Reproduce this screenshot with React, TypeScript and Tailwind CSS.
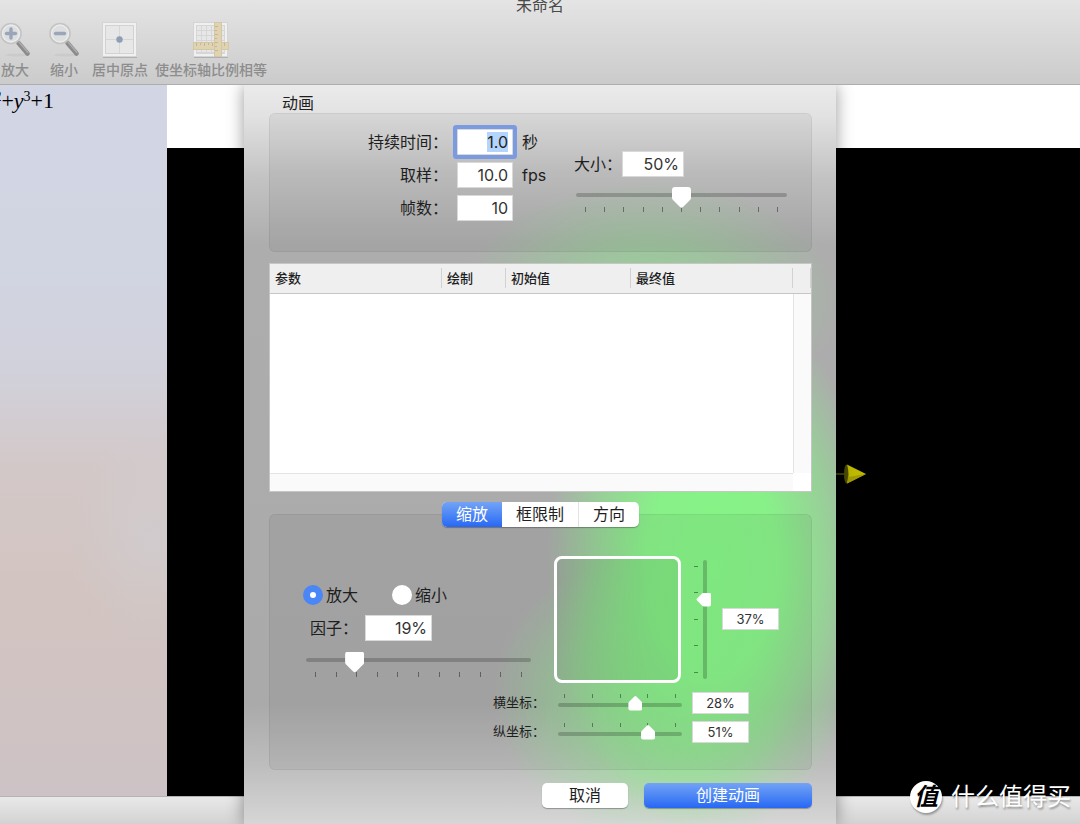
import { useEffect, useRef, useState } from "react";
import type { ReactNode } from "react";
import clsx from "clsx";

/* ---------- Toolbar icons ---------- */
function MagnifierIcon({ plus }: { plus?: boolean }) {
  return (
    <svg width="36" height="36" viewBox="0 0 36 36" fill="none">
      <ellipse cx="20" cy="33" rx="12" ry="1.5" fill="#c4c4c4" opacity="0.6" />
      <path d="M21.500 21l9 10.500" stroke="#8b8b8b" strokeWidth="4.6" strokeLinecap="round" />
      <path d="M22 20l9 10.500" stroke="#adadad" strokeWidth="1.4" strokeLinecap="round" />
      <circle cx="14" cy="11.500" r="10" fill="#dcdee0" stroke="#c4c4c4" strokeWidth="1.600" />
      <circle cx="14" cy="11.500" r="8.400" stroke="#ececec" strokeWidth="1.200" />
      <path d="M9.500 11.500h9" stroke="#9aa6b8" strokeWidth="3.400" strokeLinecap="round" />
      {plus && <path d="M14 7v9" stroke="#9aa6b8" strokeWidth="3.400" strokeLinecap="round" />}
    </svg>
  );
}

function CenterIcon() {
  return (
    <svg width="36" height="36" viewBox="0 0 36 36" fill="none">
      <path d="M1 35.500h34" stroke="#b0b0b0" />
      <rect x="0.500" y="0.500" width="34" height="34" fill="#f0f0f0" stroke="#d4d4d4" />
      <rect x="3.500" y="3.500" width="28" height="28" fill="#e7e7e7" stroke="#d2d2d2" />
      <path d="M17.500 4v27M4 17.500h27" stroke="#d6d6d6" />
      <circle cx="17.500" cy="17.500" r="3.200" fill="#8f9fb3" />
    </svg>
  );
}

function RulerIcon() {
  return (
    <svg width="36" height="36" viewBox="0 0 36 36" fill="none">
      <path d="M1 35.500h34" stroke="#b0b0b0" />
      <rect x="0.500" y="0.500" width="34" height="34" fill="#f0f0f0" stroke="#d4d4d4" />
      <rect x="3.500" y="3.500" width="28" height="28" fill="#e7e7e7" stroke="#d6d6d6" />
      <path
        d="M8.500 4v27M13.500 4v27M18.500 4v27M28.500 4v27M4 8.500h27M4 13.500h27M4 18.500h27M4 30.500h27"
        stroke="#d6d6d6"
      />
      <rect x="0.500" y="20.500" width="35" height="7" fill="#dfd3b1" stroke="#d3c7a6" />
      <path d="M3.500 21v3M7.500 21v2M11.500 21v3M15.500 21v2M19.500 21v3M31.500 21v3" stroke="#c3b692" />
      <rect x="21.500" y="0.500" width="7" height="34" fill="#dfd3b1" stroke="#d3c7a6" />
      <path d="M22 4.500h3M22 8.500h2M22 12.500h3M22 16.500h2M22 20.500h3M22 24.500h2M22 28.500h3" stroke="#c3b692" />
    </svg>
  );
}

function ToolbarItem({ label, children }: { label: string; children: ReactNode }) {
  return (
    <button className="flex min-w-[42px] shrink-0 flex-col items-center gap-1 text-sm leading-4 font-medium text-[#8d8d8d]">
      {children}
      {label}
    </button>
  );
}

/* ---------- Form pieces ---------- */
function Ticks({ count, className }: { count: number; className: string }) {
  return (
    <div aria-hidden className={clsx("flex justify-between", className)}>
      {Array.from({ length: count }, (_, i) => (
        <span key={i} className="h-full w-px bg-black/40" />
      ))}
    </div>
  );
}

function Slider({ label, initial, className }: { label: string; initial: number; className: string }) {
  const [value, setValue] = useState(initial);
  return (
    <div className={className}>
      <input
        type="range"
        aria-label={label}
        value={value}
        onChange={(e) => setValue(Number(e.target.value))}
        className="block h-[22px] w-full appearance-none bg-transparent [&::-webkit-slider-runnable-track]:h-1 [&::-webkit-slider-runnable-track]:rounded-full [&::-webkit-slider-runnable-track]:bg-[linear-gradient(#0003,#0003)] [&::-webkit-slider-thumb]:mt-[-6px] [&::-webkit-slider-thumb]:h-[21px] [&::-webkit-slider-thumb]:w-[19px] [&::-webkit-slider-thumb]:appearance-none [&::-webkit-slider-thumb]:bg-white [&::-webkit-slider-thumb]:[clip-path:path('M3_0H16Q19_0_19_3V11Q19_12_18_13L11_20Q9.500_21.500_8_20L1_13Q0_12_0_11V3Q0_0_3_0Z')]"
      />
      <Ticks count={11} className="mt-px h-[5px] px-[9px]" />
    </div>
  );
}

function SmallSlider({ id, initial }: { id: string; initial: number }) {
  const [value, setValue] = useState(initial);
  return (
    <div className="w-[124px]">
      <Ticks count={5} className="h-1 px-1.5" />
      <input
        id={id}
        type="range"
        min={-100}
        max={100}
        value={value}
        onChange={(e) => setValue(Number(e.target.value))}
        className="block h-[14px] w-full appearance-none bg-transparent [&::-webkit-slider-runnable-track]:h-1 [&::-webkit-slider-runnable-track]:rounded-full [&::-webkit-slider-runnable-track]:bg-[linear-gradient(#0003,#0003)] [&::-webkit-slider-thumb]:mt-[-7px] [&::-webkit-slider-thumb]:h-[15px] [&::-webkit-slider-thumb]:w-[14px] [&::-webkit-slider-thumb]:appearance-none [&::-webkit-slider-thumb]:bg-white [&::-webkit-slider-thumb]:[clip-path:path('M2_15H12Q14_15_14_13V8Q14_7_13_6L8_1Q7_0_6_1L1_6Q0_7_0_8V13Q0_15_2_15Z')]"
      />
    </div>
  );
}

function VerticalSlider({ label, initial }: { label: string; initial: number }) {
  const [value, setValue] = useState(initial);
  return (
    <div className="flex h-[119px]">
      <div aria-hidden className="flex w-1 flex-col justify-between py-1.5">
        {[0, 1, 2, 3, 4].map((i) => (
          <span key={i} className="h-px w-full bg-black/40" />
        ))}
      </div>
      <input
        type="range"
        aria-label={label}
        min={-100}
        max={100}
        value={value}
        onChange={(e) => setValue(Number(e.target.value))}
        className="block h-full w-[14px] appearance-none bg-transparent [direction:rtl] [writing-mode:vertical-lr] [&::-webkit-slider-runnable-track]:w-1 [&::-webkit-slider-runnable-track]:rounded-full [&::-webkit-slider-runnable-track]:bg-[linear-gradient(#0003,#0003)] [&::-webkit-slider-thumb]:ml-[-7px] [&::-webkit-slider-thumb]:h-[14px] [&::-webkit-slider-thumb]:w-[15px] [&::-webkit-slider-thumb]:appearance-none [&::-webkit-slider-thumb]:bg-white [&::-webkit-slider-thumb]:[clip-path:path('M15_2V12Q15_14_13_14H8Q7_14_6_13L1_8Q0_7_1_6L6_1Q7_0_8_0H13Q15_0_15_2Z')]"
      />
    </div>
  );
}

const fieldClass =
  "h-[26px] border border-black/15 bg-white px-1 text-right text-base text-[#333] outline-none";
const smallFieldClass =
  "h-[22px] w-[57px] border border-black/15 bg-white text-center text-[13px] text-[#333] outline-none";

const columns = ["参数", "绘制", "初始值", "最终值"];
const modes = ["缩放", "框限制", "方向"];

/* ---------- Sheet ---------- */
function AnimationSheet() {
  const durationRef = useRef<HTMLInputElement>(null);
  const [mode, setMode] = useState(modes[0]);

  useEffect(() => {
    durationRef.current?.focus();
    durationRef.current?.select();
  }, []);

  return (
    <section
      role="dialog"
      aria-labelledby="sheet-title"
      className="z-10 w-[592px] justify-self-center bg-[radial-gradient(ellipse_165px_270px_at_468px_480px,#86f586_0%,#86f586f0_40%,#88ee8890_70%,#90e09000_100%),radial-gradient(ellipse_150px_140px_at_400px_610px,#86ee86b0_0%,#88ee8870_50%,#90e09000_100%),radial-gradient(ellipse_190px_120px_at_406px_215px,#8ce88cb0_0%,#8ce08c60_50%,#90e09000_100%),linear-gradient(#ebebeb_0px,#e2e2e2_30px,#c4c4c4_90px,#adadad_160px,#aaaaaa_620px,#bdbdbd_680px,#d6d6d6_739px)] pt-[9px] pr-6 pb-4 pl-[25px] text-[#1e1e1e] shadow-[0_0_16px_rgba(0,0,0,0.4)]"
    >
      <h2 id="sheet-title" className="pl-[13px] text-base leading-[19px]">
        动画
      </h2>

      <div className="flex h-[139px] rounded-md border border-black/5 bg-black/5 pl-[97px]">
        <div className="grid grid-cols-[81px_56px_28px] content-start items-center gap-x-[9px] gap-y-[7px] pt-[15px] text-base leading-[26px]">
          <label htmlFor="duration" className="text-right whitespace-nowrap">持续时间：</label>
          <input
            ref={durationRef}
            id="duration"
            defaultValue="1.0"
            className={clsx(fieldClass, "rounded-[1px] ring-4 ring-[#7b9ae0] selection:bg-[#b3d4fc] selection:text-[#222]")}
          />
          <span>秒</span>
          <label htmlFor="sampling" className="text-right">取样：</label>
          <input id="sampling" defaultValue="10.0" className={fieldClass} />
          <span>fps</span>
          <label htmlFor="frames" className="text-right">帧数：</label>
          <input id="frames" defaultValue="10" className={fieldClass} />
        </div>
        <div className="ml-6 pt-[37px]">
          <div className="flex text-base leading-[26px]">
            <label htmlFor="size">大小：</label>
            <input id="size" defaultValue="50%" className={clsx(fieldClass, "w-[62px]")} />
          </div>
          <Slider label="大小" initial={50} className="mt-[7px] ml-0.5 w-[211px]" />
        </div>
      </div>

      <div className="mt-[11px] border border-[#c6c6c6] bg-white">
        <table className="w-full table-fixed border-collapse text-[13px]">
          <colgroup>
            <col className="w-[172px]" />
            <col className="w-16" />
            <col className="w-[125px]" />
            <col />
            <col className="w-[18px]" />
          </colgroup>
          <thead>
            <tr className="h-[29px] border-b border-[#c6c6c6] bg-[#efefef]">
              {columns.map((name) => (
                <th key={name} scope="col" className="p-0 text-left font-medium">
                  <div className="border-r border-[#d2d2d2] pl-[5px] leading-5">{name}</div>
                </th>
              ))}
              <td className="p-0">
                <div className="h-5 border-r border-[#d2d2d2]" />
              </td>
            </tr>
          </thead>
        </table>
        {/* empty rows with scrollbar gutters */}
        <div className="flex h-[179px]">
          <div className="flex-1" />
          <div className="w-[18px] border-l border-[#e4e4e4] bg-[#fafafa]" />
        </div>
        <div className="flex h-[18px]">
          <div className="flex-1 border-t border-[#e4e4e4] bg-[#fafafa]" />
          <div className="w-[18px]" />
        </div>
      </div>

      <div className="relative mt-2.5 -mb-[13px] flex justify-center">
        <div role="tablist" className="flex overflow-hidden rounded-[5px] bg-white shadow-[0_1px_1px_rgba(0,0,0,0.3)]">
          {modes.map((name) => (
            <button
              key={name}
              role="tab"
              aria-selected={mode === name}
              onClick={() => setMode(name)}
              className={clsx(
                "h-[25px] px-3.5 text-base leading-[25px]",
                mode === name
                  ? "bg-gradient-to-b from-[#73a3f5] to-[#2767f4] text-white"
                  : "border-r border-[#e2e2e2] last:border-r-0"
              )}
            >
              {name}
            </button>
          ))}
        </div>
      </div>

      <div className="rounded-md border border-black/5 bg-black/5 pt-[41px] pb-[26px]">
        <div className="flex pl-[33px]">
          <div className="w-[228px] pt-[29px]">
            <div className="flex gap-[34px] text-base leading-5">
              <label className="flex items-center gap-[3px]">
                <input
                  type="radio"
                  name="direction"
                  defaultChecked
                  className="size-5 appearance-none rounded-full border-[#4a86f5] bg-white checked:border-[7px]"
                />
                放大
              </label>
              <label className="flex items-center gap-[3px]">
                <input
                  type="radio"
                  name="direction"
                  className="size-5 appearance-none rounded-full border-[#4a86f5] bg-white checked:border-[7px]"
                />
                缩小
              </label>
            </div>
            <div className="mt-2.5 flex gap-[7px] pl-[7px] text-base leading-[26px]">
              <label htmlFor="factor">因子：</label>
              <input id="factor" defaultValue="19%" className={clsx(fieldClass, "w-[67px]")} />
            </div>
            <Slider label="因子" initial={19} className="mt-2 ml-[3px] w-[225px]" />
          </div>
          <div className="ml-[23px] size-[127px] rounded-lg border-[3px] border-white bg-black/5" />
          <div className="ml-[13px] flex items-center gap-2.5">
            <VerticalSlider label="竖坐标" initial={37} />
            <input aria-label="竖坐标" defaultValue="37%" className={smallFieldClass} />
          </div>
        </div>

        <div className="mt-[9px] grid grid-cols-[55px_124px_57px] items-center gap-x-[10px] gap-y-[7px] pl-[223px] text-[13px]">
          <label htmlFor="x-slider">横坐标：</label>
          <SmallSlider id="x-slider" initial={28} />
          <input aria-label="横坐标" defaultValue="28%" className={smallFieldClass} />
          <label htmlFor="y-slider">纵坐标：</label>
          <SmallSlider id="y-slider" initial={51} />
          <input aria-label="纵坐标" defaultValue="51%" className={smallFieldClass} />
        </div>
      </div>

      <div className="mt-[13px] flex justify-end gap-4 text-base">
        <button className="h-[25px] w-[86px] rounded-[5px] bg-white leading-[25px] shadow-[0_1px_1px_rgba(0,0,0,0.3)]">
          取消
        </button>
        <button className="h-[25px] w-[168px] rounded-[5px] bg-gradient-to-b from-[#73a3f5] to-[#2767f4] leading-[25px] text-white shadow-[0_1px_1px_rgba(0,0,0,0.3)]">
          创建动画
        </button>
      </div>
    </section>
  );
}

export default function App() {
  return (
    <div
      lang="zh-CN"
      className="relative flex min-h-screen flex-col overflow-hidden font-['Inter','Noto_Sans_CJK_SC',sans-serif]"
    >
      <header className="h-[85px] border-b border-[#adadad] bg-gradient-to-b from-[#e4e4e4] to-[#cbcbcb]">
        <h1 className="h-[22px] text-center text-base leading-[10px] text-[#4a4a4a]">未命名</h1>
        <nav className="-ml-1.5 flex gap-[7px]">
          <ToolbarItem label="放大"><MagnifierIcon plus /></ToolbarItem>
          <ToolbarItem label="缩小"><MagnifierIcon /></ToolbarItem>
          <ToolbarItem label="居中原点"><CenterIcon /></ToolbarItem>
          <ToolbarItem label="使坐标轴比例相等"><RulerIcon /></ToolbarItem>
        </nav>
      </header>

      <div className="grid flex-1 overflow-hidden *:[grid-area:1/1]">
        <div className="flex flex-col">
          <div className="flex flex-1">
            <aside className="w-[167px] bg-[radial-gradient(ellipse_80px_110px_at_150px_455px,#cfd0d680,#cfd0d600),linear-gradient(#d2d5e3_0%,#d1d5e2_25%,#d1d1db_40%,#d3c8c8_54%,#d2c4c0_72%,#cdc2c5_100%)]">
              <p className="flex w-[54px] justify-end overflow-hidden font-['Liberation_Serif',serif] text-[22px] leading-8 whitespace-nowrap text-black">
                <span>
                  <i>x</i>
                  <sup className="text-sm">2</sup>+<i>y</i>
                  <sup className="text-sm">3</sup>+1
                </span>
              </p>
            </aside>
            <main className="flex flex-1 flex-col">
              <div className="h-[63px] bg-white" />
              <div className="relative flex-1 bg-black">
                <svg className="absolute top-[315px] left-[669px]" width="31" height="22" viewBox="0 0 31 22">
                  <path d="M0 11h12" stroke="#77770a" />
                  <ellipse cx="10.500" cy="11" rx="2.500" ry="9.500" fill="#4b4a00" />
                  <path d="M11 1.500L30 11L11 20.500Q14 11 11 1.500Z" fill="#bdb800" />
                  <path d="M12 14L30 11L11 20.500Z" fill="#a09b06" />
                </svg>
              </div>
            </main>
          </div>
          <footer className="h-7 border-t border-[#b4b4b4] bg-gradient-to-b from-[#e9e9e9] to-[#d2d2d2]" />
        </div>
        <AnimationSheet />
      </div>

      <div className="absolute right-[9px] bottom-[11px] z-20 flex items-center gap-[9px] text-2xl leading-8 text-white [text-shadow:1px_2px_2px_rgba(0,0,0,0.35)]">
        <span className="flex size-8 items-center justify-center rounded-full bg-white font-bold text-black italic shadow-[1px_2px_2px_rgba(0,0,0,0.3)] [text-shadow:none]">
          值
        </span>
        什么值得买
      </div>
    </div>
  );
}
